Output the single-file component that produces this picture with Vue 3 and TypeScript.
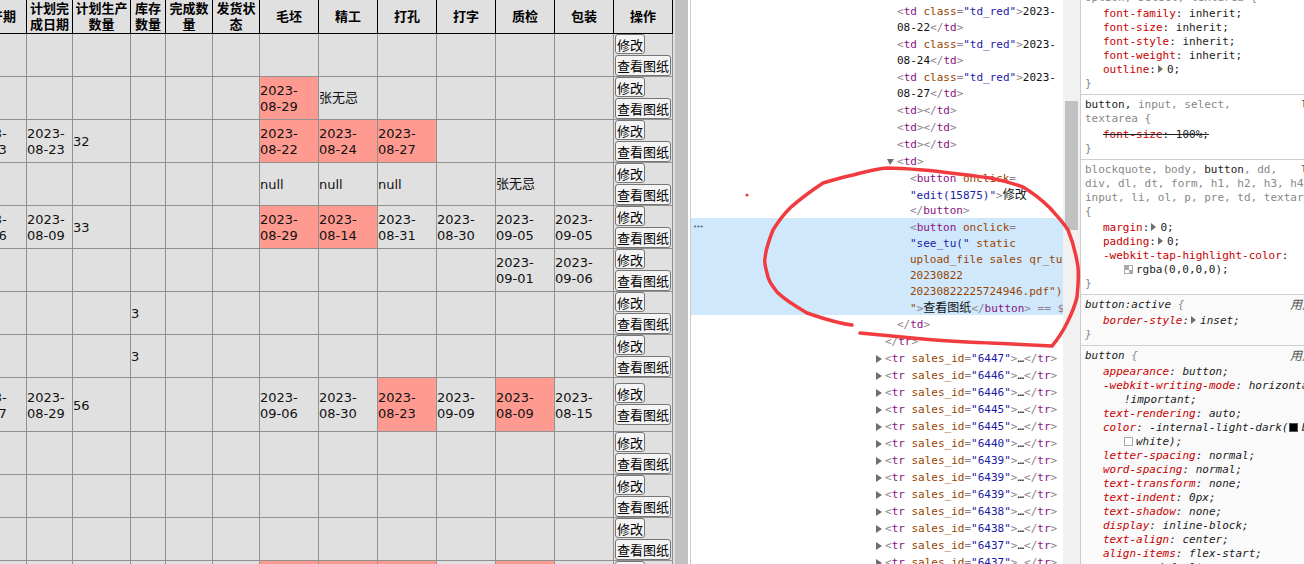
<script setup lang="ts">
type Tok = [string, string]
interface DomNode { ind: number; arrow?: string; sel?: boolean; lines: Tok[][] }
interface Row { h?: boolean; c: (string | null)[] }

const heads = ['产期', '计划完成日期', '计划生产数量', '库存数量', '完成数量', '发货状态', '毛坯', '精工', '打孔', '打字', '质检', '包装']

const R = '!'
const NAME = '张无忌'
const rows: Row[] = [
  { c: [] },
  { c: ['', '', '', '', '', '', R + '2023-08-29', NAME] },
  { c: ['2023-08-13', '2023-08-23', '32', '', '', '', R + '2023-08-22', R + '2023-08-24', R + '2023-08-27'] },
  { c: ['', '', '', '', '', '', 'null', 'null', 'null', '', NAME] },
  { c: ['2023-08-06', '2023-08-09', '33', '', '', '', R + '2023-08-29', R + '2023-08-14', '2023-08-31', '2023-08-30', '2023-09-05', '2023-09-05'] },
  { c: ['', '', '', '', '', '', '', '', '', '', '2023-09-01', '2023-09-06'] },
  { c: ['', '', '', '3'] },
  { c: ['', '', '', '3'] },
  { h: true, c: ['2023-08-17', '2023-08-29', '56', '', '', '', '2023-09-06', '2023-08-30', R + '2023-08-23', '2023-09-09', R + '2023-08-09', '2023-08-15'] },
  { c: [] },
  { c: [] },
  { c: [] },
  { c: ['', '', '', '', '', '', R, R, R, '', R] },
]

const cell = (r: Row, i: number): string => r.c[i] ?? ''
const isRed = (r: Row, i: number): boolean => cell(r, i).startsWith(R)
const label = (r: Row, i: number): string => cell(r, i).replace(R, '')

const b = (t: string): Tok => ['br', t]
const tag = (t: string): Tok => ['tg', t]
const an = (t: string): Tok => ['an', t]
const av = (t: string): Tok => ['av', t]
const tx = (t: string): Tok => ['tx', t]
const han = (t: string): Tok => ['han', t]

const tdRed = (d: string): DomNode => ({
  ind: 2,
  lines: [
    [b('<'), tag('td'), tx(' '), an('class'), b('='), av('"td_red"'), b('>'), tx('2023-')],
    [tx(d), b('</'), tag('td'), b('>')],
  ],
})
const tdEmpty = (): DomNode => ({ ind: 2, lines: [[b('<'), tag('td'), b('>'), b('</'), tag('td'), b('>')]] })
const trRow = (id: string): DomNode => ({
  ind: 1,
  arrow: 'right',
  lines: [[b('<'), tag('tr'), tx(' '), an('sales_id'), b('='), av(`"${id}"`), b('>'), tx('…'), b('</'), tag('tr'), b('>')]],
})

const nodes: DomNode[] = [
  tdRed('08-22'),
  tdRed('08-24'),
  tdRed('08-27'),
  tdEmpty(),
  tdEmpty(),
  tdEmpty(),
  { ind: 2, arrow: 'down', lines: [[b('<'), tag('td'), b('>')]] },
  {
    ind: 3,
    lines: [
      [b('<'), tag('button'), tx(' '), an('onclick'), b('=')],
      [av('"edit(15875)"'), b('>'), han('修改')],
      [b('</'), tag('button'), b('>')],
    ],
  },
  {
    ind: 3,
    sel: true,
    lines: [
      [b('<'), tag('button'), tx(' '), an('onclick'), b('=')],
      [av('"see_tu("'), tx(' '), an('static')],
      [an('upload_file sales qr_tu')],
      [an('20230822')],
      [an('20230822225724946.pdf")')],
      [an('"'), b('>'), han('查看图纸'), b('</'), tag('button'), b('>'), b(' == $0')],
    ],
  },
  { ind: 2, lines: [[b('</'), tag('td'), b('>')]] },
  { ind: 1, lines: [[b('</'), tag('tr'), b('>')]] },
  ...['6447', '6446', '6446', '6445', '6445', '6440', '6439', '6439', '6439', '6438', '6438', '6437', '6437'].map(trRow),
]
</script>

<template>
  <div class="screen">
    <div class="page">
      <div class="table-pane">
        <table class="grid">
          <colgroup>
            <col class="w-first" />
            <col class="w-date" />
            <col class="w-plan" />
            <col class="w-stock" />
            <col class="w-done" />
            <col class="w-ship" />
            <col class="w-step" span="6" />
            <col class="w-step" />
          </colgroup>
          <thead>
            <tr>
              <th v-for="(h, i) in heads" :key="i" :class="{ first: i === 0 }">
                <div v-if="i === 0" class="clip-head">{{ h }}</div>
                <template v-else>{{ h }}</template>
              </th>
              <th>操作</th>
            </tr>
          </thead>
          <tbody>
            <tr v-for="(r, ri) in rows" :key="ri" :class="{ tall: r.h }">
              <td
                v-for="i in 12"
                :key="i"
                :class="{ red: isRed(r, i - 1), first: i === 1, name: label(r, i - 1) === NAME }"
              >
                <div v-if="i === 1" class="clip-cell"><span class="clip-inner">{{ label(r, 0) }}</span></div>
                <template v-else>{{ label(r, i - 1) }}</template>
              </td>
              <td class="ops">
                <div class="ops-box">
                  <button class="btn" type="button">修改</button>
                  <button class="btn btn-wide" type="button">查看图纸</button>
                </div>
              </td>
            </tr>
          </tbody>
        </table>
      </div>
      <div class="page-scroll"></div>
    </div>

    <div class="elements">
      <div v-for="(n, ni) in nodes" :key="ni" class="node" :class="[`ind-${n.ind}`, { sel: n.sel }]">
        <span v-if="n.sel" class="dots">•••</span>
        <i v-if="n.arrow" class="tri" :class="n.arrow"></i>
        <div v-for="(l, li) in n.lines" :key="li" class="line">
          <span v-for="(t, ti) in l" :key="ti" :class="t[0]">{{ t[1] }}</span>
        </div>
      </div>
    </div>

    <div class="el-scroll"><div class="el-thumb"></div></div>

    <div class="styles">
      <section class="rule clip-top">
        <div class="sl"><span class="dim">option, select, textarea {</span></div>
        <div class="props">
          <div class="p"><span class="k">font-family</span>: inherit;</div>
          <div class="p"><span class="k">font-size</span>: inherit;</div>
          <div class="p"><span class="k">font-style</span>: inherit;</div>
          <div class="p"><span class="k">font-weight</span>: inherit;</div>
          <div class="p"><span class="k">outline</span>:<i class="mini"></i>0;</div>
        </div>
        <div class="sl"><span class="dim">}</span></div>
      </section>

      <section class="rule">
        <span class="src">l</span>
        <div class="sl">button, <span class="dim">input, select,</span></div>
        <div class="sl"><span class="dim">textarea {</span></div>
        <div class="props">
          <div class="p struck"><span class="k">font-size</span>: 100%;</div>
        </div>
        <div class="sl"><span class="dim">}</span></div>
      </section>

      <section class="rule">
        <span class="src">l</span>
        <div class="sl"><span class="dim">blockquote, body,</span> button<span class="dim">, dd,</span></div>
        <div class="sl"><span class="dim">div, dl, dt, form, h1, h2, h3, h4</span></div>
        <div class="sl"><span class="dim">input, li, ol, p, pre, td, textarea</span></div>
        <div class="sl"><span class="dim">{</span></div>
        <div class="props">
          <div class="p"><span class="k">margin</span>:<i class="mini"></i>0;</div>
          <div class="p"><span class="k">padding</span>:<i class="mini"></i>0;</div>
          <div class="p"><span class="k">-webkit-tap-highlight-color</span>:</div>
          <div class="p cont"><i class="swatch check"></i>rgba(0,0,0,0);</div>
        </div>
        <div class="sl"><span class="dim">}</span></div>
      </section>

      <section class="rule ua">
        <span class="src cjk">用户代理样式表</span>
        <div class="sl">button:active <span class="dim">{</span></div>
        <div class="props">
          <div class="p"><span class="k">border-style</span>:<i class="mini"></i>inset;</div>
        </div>
        <div class="sl"><span class="dim">}</span></div>
      </section>

      <section class="rule ua">
        <span class="src cjk">用户代理样式表</span>
        <div class="sl">button <span class="dim">{</span></div>
        <div class="props">
          <div class="p"><span class="k">appearance</span>: button;</div>
          <div class="p"><span class="k">-webkit-writing-mode</span>: horizontal-tb</div>
          <div class="p cont">!important;</div>
          <div class="p"><span class="k">text-rendering</span>: auto;</div>
          <div class="p"><span class="k">color</span>: -internal-light-dark(<i class="swatch black"></i>black,</div>
          <div class="p cont"><i class="swatch white"></i>white);</div>
          <div class="p"><span class="k">letter-spacing</span>: normal;</div>
          <div class="p"><span class="k">word-spacing</span>: normal;</div>
          <div class="p"><span class="k">text-transform</span>: none;</div>
          <div class="p"><span class="k">text-indent</span>: 0px;</div>
          <div class="p"><span class="k">text-shadow</span>: none;</div>
          <div class="p"><span class="k">display</span>: inline-block;</div>
          <div class="p"><span class="k">text-align</span>: center;</div>
          <div class="p"><span class="k">align-items</span>: flex-start;</div>
          <div class="p"><span class="k">cursor</span>: default;</div>
        </div>
      </section>
    </div>

    <svg class="ink" viewBox="0 0 1304 564" width="1304" height="564" aria-hidden="true">
      <path
        d="M852 325 C835 323 822 318 807 313 C795 306 785 300 777 292 C771 284 768 280 767 273 C765 266 764 262 765 258 C766 248 769 240 773 230 C778 222 783 215 790 208 C800 199 811 191 823 183 C833 180 843 177 853 175 C864 172 875 169 887 168 C899 168 911 169 923 170 C945 172 968 175 990 178 C1001 180 1012 183 1023 187 C1033 193 1042 200 1050 208 C1056 215 1063 222 1068 230 C1073 242 1076 254 1078 267 C1079 277 1078 287 1077 297 C1075 306 1071 315 1067 323 C1063 331 1058 339 1052 346 C1032 345 1011 344 990 343 C968 342 945 341 923 339 C902 337 881 335 860 333"
        fill="none"
        stroke="#f23b3f"
        stroke-width="3.5"
        stroke-linecap="round"
        stroke-linejoin="round"
      />
      <circle cx="747" cy="195" r="1.6" fill="#f23b3f" />
    </svg>
  </div>
</template>

<style>
html,
body {
  margin: 0;
  overflow: hidden;
  background: #fff;
}
</style>

<style scoped>
.screen {
  position: relative;
  display: flex;
  width: 1304px;
  height: 564px;
  overflow: hidden;
  background: #fff;
}

/* ---------- page on the left ---------- */
.page {
  display: flex;
  flex: 0 0 690px;
  height: 100%;
}
.table-pane {
  flex: 0 0 675px;
  height: 100%;
  overflow: hidden;
  background: #e0e0e0;
}
.page-scroll {
  flex: 0 0 13px;
  background: #c1c1c1;
}
.grid {
  border-collapse: collapse;
  table-layout: fixed;
  width: 673px;
  font: 13px/16px "DejaVu Sans", "Noto Sans CJK SC", sans-serif;
  color: #111;
}
.w-first { width: 26.5px; }
.w-date { width: 46px; }
.w-plan { width: 58px; }
.w-stock { width: 35px; }
.w-done { width: 47px; }
.w-ship { width: 47px; }
.w-step { width: 59px; }
.grid thead tr { height: 33px; }
.grid th {
  padding: 1px 1px 0;
  border: 1px solid #000;
  border-top: 0;
  font-weight: 700;
  text-align: center;
  color: #000;
  overflow: hidden;
}
.grid td {
  padding: 2px 0 0;
  border: 1px solid #919191;
  text-align: left;
  overflow: hidden;
}
.grid td.name { padding-top: 0; }
.grid tbody tr { height: 43px; }
.grid tbody tr.tall { height: 54px; }
.grid th.first,
.grid td.first { border-left: 0; padding-left: 0; padding-right: 0; }
.grid td.red { background: #ff9a90; }
.clip-head {
  display: flex;
  justify-content: flex-end;
  padding-right: 10px;
  white-space: nowrap;
  overflow: hidden;
}
.clip-cell {
  display: flex;
  justify-content: flex-end;
  overflow: hidden;
  padding-right: 19px;
}
.clip-inner {
  flex: 0 0 38px;
}
.grid td.ops { padding: 0 0 0 1px; }
.ops-box {
  display: flex;
  flex-direction: column;
  align-items: flex-start;
  gap: 1px;
}
.tall .ops-box { margin-bottom: 1px; }
.btn {
  box-sizing: border-box;
  height: 20px;
  margin: 0;
  padding: 2px 1px 0;
  border: 1px solid #767676;
  border-radius: 3px;
  background: #f4f4f4;
  color: #000;
  font: 13px/16px "Noto Sans CJK SC", sans-serif;
}
.btn-wide { height: 21px; padding-top: 0; }

/* ---------- elements panel ---------- */
.elements {
  box-sizing: border-box;
  flex: 0 0 373px;
  height: 100%;
  padding-top: 2px;
  border-left: 1px solid #ccc;
  overflow: hidden;
  font: 11px/18px "DejaVu Sans Mono", "Noto Sans CJK SC", monospace;
  color: #222;
}
.node {
  position: relative;
  padding-top: 1px;
  white-space: pre;
  overflow: hidden;
}
.ind-1 { padding-left: 194px; }
.ind-2 { padding-left: 206px; }
.ind-3 { padding-left: 219px; }
.node.sel { background: #cfe8fc; }
.line { height: 16px; }
.dots {
  position: absolute;
  left: 2px;
  top: 1px;
  font-size: 7px;
  line-height: 16px;
  letter-spacing: -1px;
  color: #666;
}
.tri {
  position: absolute;
  width: 0;
  height: 0;
  border-style: solid;
  border-color: transparent;
}
.tri.right {
  left: 185px;
  top: 6px;
  border-width: 4px 0 4px 6px;
  border-left-color: #6e6e6e;
}
.tri.down {
  left: 196px;
  top: 7px;
  border-width: 6px 4px 0 3px;
  border-top-color: #6e6e6e;
}
.br { color: #8a7f8a; }
.tg { color: #881280; }
.an { color: #994500; }
.av { color: #1a1aa6; }
.tx { color: #111; }
.han { color: #111; font-size: 12px; }

.el-scroll {
  flex: 0 0 17px;
  height: 100%;
  padding: 101px 2px 0;
  box-sizing: border-box;
  background: #f1f1f1;
}
.el-thumb {
  height: 129px;
  background: #c1c1c1;
}

/* ---------- styles panel ---------- */
.styles {
  flex: 1 1 auto;
  min-width: 0;
  height: 100%;
  border-left: 1px solid #ccc;
  overflow: hidden;
  font: 11px/14px "DejaVu Sans Mono", "Noto Sans CJK SC", monospace;
  color: #222;
  white-space: pre;
}
.rule {
  position: relative;
  padding: 3px 0 3px 4px;
  border-bottom: 1px solid #d0d0d0;
  overflow: hidden;
}
.clip-top { margin-top: -12px; }
.rule.ua {
  background: #fafafa;
  font-style: italic;
}
.rule:last-child { border-bottom: 0; }
.props { margin-top: 2px; padding-left: 18px; }
.p.cont { padding-left: 21px; }
.k { color: #c80000; }
.dim { color: #888; }
.struck { text-decoration: line-through; text-decoration-color: #222; }
.src {
  position: absolute;
  top: 3px;
  left: 220px;
  color: #555;
}
.src.cjk { left: 209px; font-size: 12px; }
.mini {
  display: inline-block;
  width: 0;
  height: 0;
  margin: 0 4px 0 2px;
  border-style: solid;
  border-width: 4px 0 4px 5px;
  border-color: transparent transparent transparent #6e6e6e;
}
.swatch {
  display: inline-block;
  box-sizing: border-box;
  width: 9px;
  height: 9px;
  margin-right: 3px;
  border: 1px solid #aaa;
  vertical-align: -1px;
}
.swatch.black { background: #000; border-color: #555; margin-left: 1px; }
.swatch.white { background: #fff; }
.swatch.check {
  background: linear-gradient(#aaa 0 0) 0 0 / 4px 4px no-repeat, linear-gradient(#aaa 0 0) 4px 4px / 4px 4px no-repeat, #fff;
}

/* ---------- hand-drawn annotation lies over everything ---------- */
.ink {
  position: absolute;
  left: 0;
  top: 0;
  pointer-events: none;
}
</style>
